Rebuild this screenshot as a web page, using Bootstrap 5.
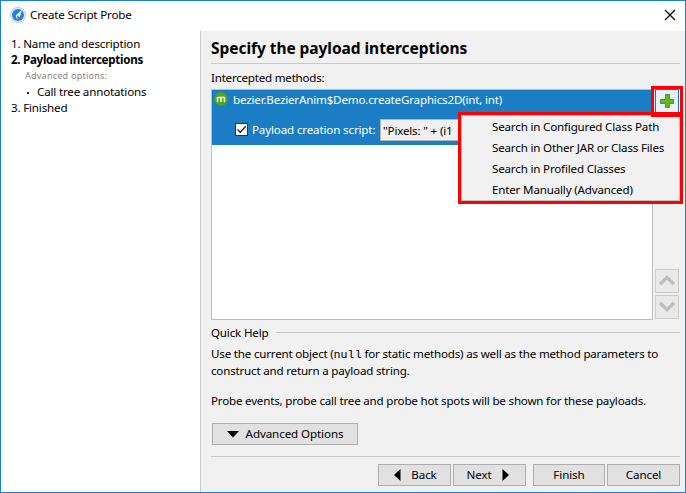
<!DOCTYPE html>
<html lang="en">
<head>
<meta charset="utf-8">
<title>Create Script Probe</title>
<link href="https://cdn.jsdelivr.net/npm/bootstrap@5.3.0/dist/css/bootstrap.min.css" rel="stylesheet">
<style>
body{font:11.6px/16px "Noto Sans","Open Sans",sans-serif;letter-spacing:-.18px;color:#000;background:#f0f0f0;overflow:hidden;white-space:nowrap}
svg{display:block;flex:none}
.dialog{width:686px;height:493px;border:1px solid #1a80d9;background:#f1f1f1}
.titlebar{height:30px;flex:none;padding:0 9px 2px 9px}
.steps{width:200px;flex:none;border-right:1px solid #c8c8c8;padding:5px 0 0 10px}
.steps .hint{font-size:9px;letter-spacing:.25px;color:#858585;padding-left:14px}
.steps .current{letter-spacing:-.29px}
.steps .sub{padding-left:26px}
.steps .sub::before{content:"";position:absolute;left:16px;top:8px;width:2px;height:2px;background:#222}
.content-pane{padding:0 5px 0 10px}
.heading{font-size:15.5px;line-height:20px;font-weight:700;letter-spacing:-.05px;height:33px;padding-top:7px;border-bottom:1px solid #c8c8c8}
.label-row{height:25px;padding-top:6px;letter-spacing:-.23px}
.listing{width:442px;height:231px;border:1px solid #bcbcbc;background:#fff}
.selected-row{height:55px;background:#1b7dc4;color:#fff}
.method{height:20px;padding-left:2px}
.method svg{margin-top:-2px}
.method span{padding-left:5px}
.script{padding:9px 0 0 23px;height:35px}
.check{width:13px;height:13px;flex:none;background:#fff;border:1px solid #333;margin-top:4px}
.script-label{margin:3px 0 0 4px;width:128px;flex:none;letter-spacing:-.15px}
.field{flex:1;height:22px;background:#f0f0f0;border:1px solid #b5b5b5;color:#000;padding:3px 0 0 2px}
.side{width:24px;margin-left:2px;padding-bottom:1px}
.tool{width:24px;height:24px;border:1px solid #cbcbcb;background:#e9e9e9}
.tool + .tool + .tool{margin-top:2px}
.add{background:#e5f1fb;border-color:#0078d7}
.mark-add{left:650px;top:85px;width:32px;height:31px;border:3px solid #f00;border-bottom-width:5px;z-index:4}
.popup{left:457px;top:111px;width:225px;height:92px;border:3px solid #f00;z-index:3}
.popup ul{height:86px;border:1px solid #b9c6c6;background:#f1f1f1;padding:0 0 0 30px}
.popup li{height:21px;line-height:21px}
.rule{height:1px;background:#c8c8c8}
.quick{height:25px}
.help{height:78px;line-height:17px;letter-spacing:-.2px}
.help p{height:17px}
.help .second{margin-top:13px}
.help code{font:11.7px/16px "Liberation Mono",monospace;color:#000;letter-spacing:0}
.push{height:22px;border:1px solid #adadad;background:#e1e1e1;padding:0;font-size:11.6px;line-height:16px;letter-spacing:-.1px;color:#000;border-radius:0;display:flex;align-items:center;justify-content:center}
.adv{width:146px;margin-left:1px;gap:7px}
.footer-bar{height:35px;padding:7px 0 0 167px;gap:2px}
.w73{width:73px}.w72{width:72px;margin-left:5px}
.prev{gap:10px;padding-left:2px}.next{gap:10px;padding-right:4px}
</style>
<script src="https://cdn.jsdelivr.net/npm/bootstrap@5.3.0/dist/js/bootstrap.bundle.min.js"></script>
</head>
<body>
<div class="dialog position-relative d-flex flex-column">
  <header class="titlebar bg-white d-flex align-items-center">
    <svg width="16" height="16" viewBox="0 0 16 16"><circle cx="8" cy="8" r="7.900" fill="#c4c4c4"/><circle cx="8" cy="8" r="7" fill="#eee"/><circle cx="8" cy="8" r="6" fill="#1683f0"/><path d="M11.800 3 10 9.500 7 12.500 5.800 8.500Z" fill="#fff"/><path d="M7 8.600h1.800v2.700L7.300 12.500Z" fill="#e8502c"/></svg>
    <span class="ms-1">Create Script Probe</span>
    <svg class="ms-auto" width="12" height="12" viewBox="0 0 12 12"><path d="M1 1 11 11M11 1 1 11" stroke="#000" stroke-width="1.200"/></svg>
  </header>
  <div class="d-flex flex-fill">
    <nav class="steps bg-white">
      <div>1. Name and description</div>
      <div class="current fw-bold">2. Payload interceptions</div>
      <div class="hint">Advanced options:</div>
      <div class="sub position-relative">Call tree annotations</div>
      <div>3. Finished</div>
    </nav>
    <main class="content-pane flex-fill">
      <h1 class="heading mb-0">Specify the payload interceptions</h1>
      <div class="label-row">Intercepted methods:</div>
      <div class="d-flex">
        <div class="listing">
          <div class="selected-row">
            <div class="method d-flex align-items-center">
              <svg width="14" height="14" viewBox="0 0 14 14"><circle cx="7" cy="7" r="6.800" fill="#55a51c"/><path d="M3.500 10V5M3.500 6.500Q5 4.600 6.900 5.700V10M6.900 6.500Q8.500 4.600 10.400 5.700V10" fill="none" stroke="#fff" stroke-width="1.500"/></svg>
              <span>bezier.BezierAnim$Demo.createGraphics2D(int, int)</span>
            </div>
            <div class="script d-flex">
              <div class="check"><svg width="11" height="11" viewBox="0 0 11 11"><path d="M1.500 5.500 4.200 8.200 9.800 2.300" fill="none" stroke="#222" stroke-width="1.300"/></svg></div>
              <div class="script-label">Payload creation script:</div>
              <div class="field">"Pixels: " + (i1</div>
            </div>
          </div>
        </div>
        <div class="side d-flex flex-column">
          <div class="tool add"><svg width="22" height="22" viewBox="0 0 22 22"><path d="M9.500 4.500h4v5h4v4h-4v4h-4v-4h-5v-4h5Z" fill="#62b71d" stroke="#4c9c14"/></svg></div>
          <div class="tool mt-auto"><svg width="22" height="22" viewBox="0 0 22 22"><path d="M4 14.300 11 7.500l7 6.800" fill="none" stroke="#bdbdbd" stroke-width="3.300"/></svg></div>
          <div class="tool"><svg width="22" height="22" viewBox="0 0 22 22"><path d="M4 7l7 6.800L18 7" fill="none" stroke="#bdbdbd" stroke-width="3.300"/></svg></div>
        </div>
      </div>
      <div class="quick d-flex align-items-center"><span>Quick Help</span><div class="rule flex-fill ms-2"></div></div>
      <div class="help">
        <p class="mb-0">Use the current object (<code>null</code> for static methods) as well as the method parameters to</p>
        <p class="mb-0">construct and return a payload string.</p>
        <p class="mb-0 second">Probe events, probe call tree and probe hot spots will be shown for these payloads.</p>
      </div>
      <button class="btn push adv"><svg width="12" height="7" viewBox="0 0 12 7"><path d="M0 0h12L6 6.500Z"/></svg><span>Advanced Options</span></button>
      <div class="rule" style="margin-top:11px"></div>
      <div class="footer-bar d-flex">
        <button class="btn push w73 prev"><svg width="7" height="12" viewBox="0 0 7 12"><path d="M6.500 0v12L0 6Z"/></svg><span>Back</span></button>
        <button class="btn push w73 next"><span>Next</span><svg width="7" height="12" viewBox="0 0 7 12"><path d="M.5 0v12L7 6Z"/></svg></button>
        <button class="btn push w72">Finish</button>
        <button class="btn push w73">Cancel</button>
      </div>
    </main>
  </div>
  <div class="mark-add position-absolute"></div>
  <div class="popup position-absolute">
    <ul class="list-unstyled mb-0">
      <li>Search in Configured Class Path</li>
      <li>Search in Other JAR or Class Files</li>
      <li>Search in Profiled Classes</li>
      <li>Enter Manually (Advanced)</li>
    </ul>
  </div>
</div>
</body>
</html>
